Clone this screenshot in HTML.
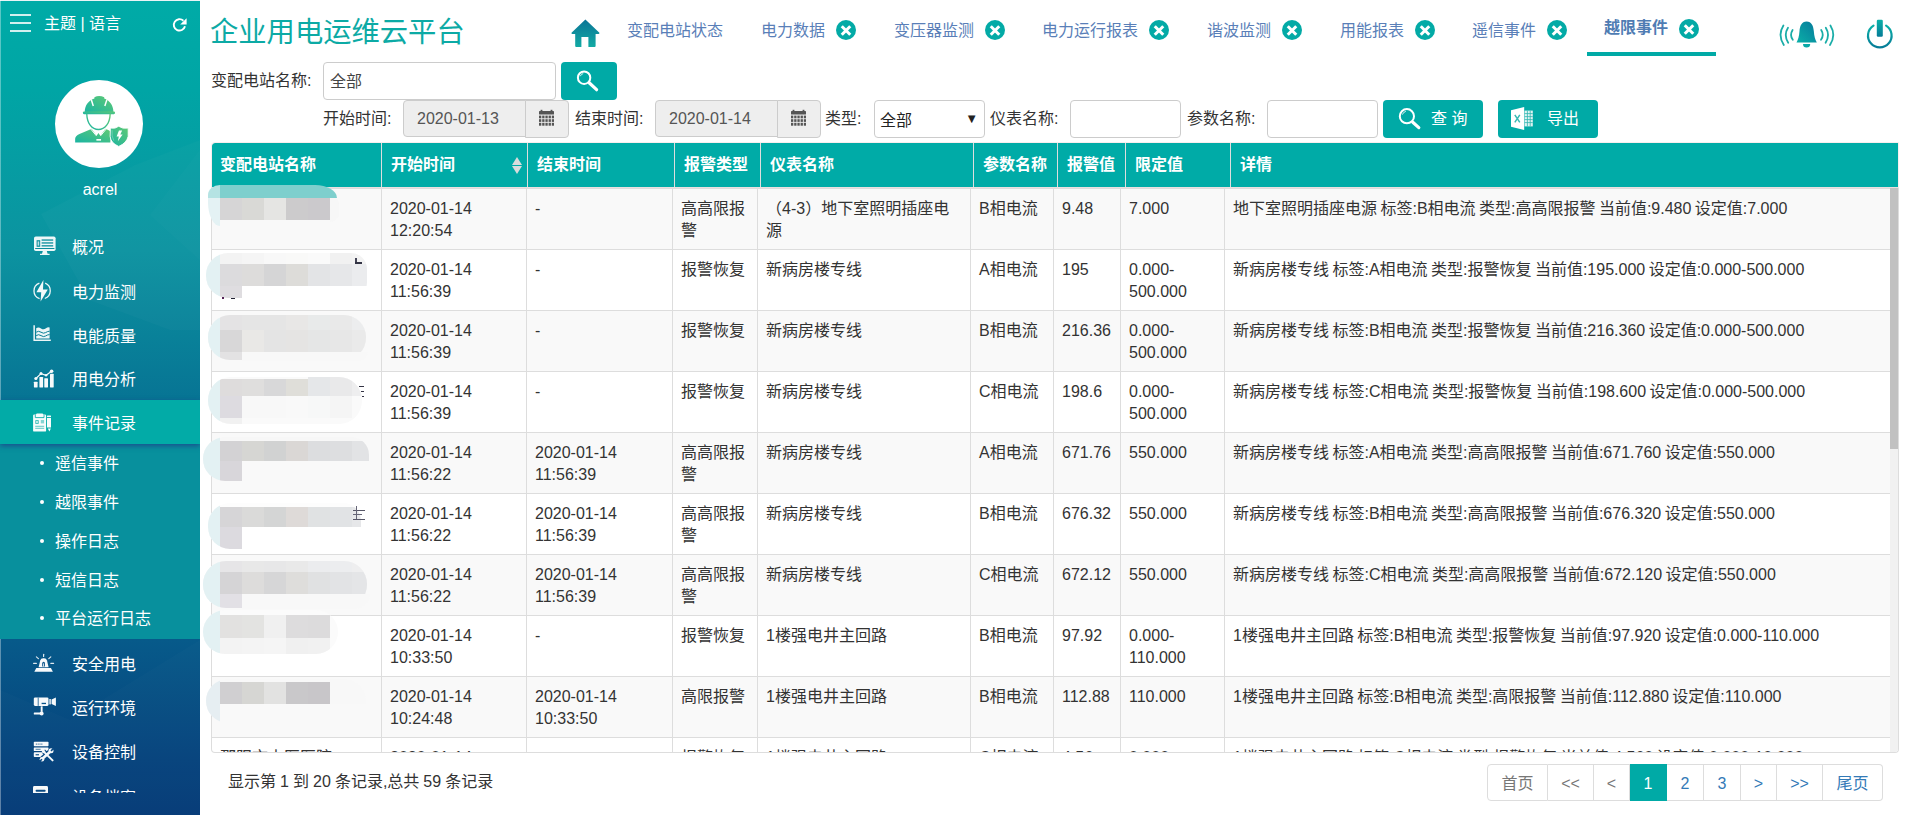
<!DOCTYPE html>
<html lang="zh-CN">
<head>
<meta charset="utf-8">
<title>企业用电运维云平台</title>
<style>
*{box-sizing:border-box;margin:0;padding:0}
html,body{width:1920px;height:815px;overflow:hidden;background:#fff}
body{font-family:"Liberation Sans","Noto Sans CJK SC",sans-serif;font-size:16px;color:#333;position:relative}
.abs{position:absolute}
#side{position:absolute;left:0;top:0;width:200px;height:815px;overflow:hidden;
 background:linear-gradient(180deg,#00aba7 0px,#00a5a5 90px,#0c93a0 250px,#077494 400px,#075a8a 640px,#06437c 760px,#053a77 815px)}
#side .topline{position:absolute;left:0;top:0;width:200px;height:1px;background:#e9f4f6}
#side .leftline{position:absolute;left:0;top:0;width:1px;height:815px;background:rgba(255,255,255,.35)}
#menu{position:absolute;left:0;top:0;width:200px;height:793px;overflow:hidden}
.ham{position:absolute;left:10px;top:14px;width:21px;height:18px}
.ham i{position:absolute;left:0;width:21px;height:2px;background:rgba(255,255,255,.82)}
.stitle{position:absolute;left:44px;top:13px;color:#fff;font-size:16px;line-height:22px;white-space:nowrap}
.avatar{position:absolute;left:55px;top:79.5px;width:88px;height:88px;border-radius:50%;background:#fff}
.uname{position:absolute;left:0;width:200px;top:179px;text-align:center;color:#fff;font-size:16px;line-height:22px}
.mi{position:absolute;left:0;width:200px;height:44px;color:#fff;font-size:16px;line-height:44px;padding-left:72px;white-space:nowrap}
.mi.act{background:#02aba7;box-shadow:0 2px 5px rgba(35,45,135,.65)}
.ic{position:absolute;left:0;top:0}
.sub{position:absolute;left:0;top:443px;width:200px;height:196px;background:#08909d}
.si{position:absolute;left:0;width:200px;height:39px;color:#fff;font-size:16px;line-height:41px;padding-left:55px;white-space:nowrap}
.si:before{content:"";position:absolute;left:39.5px;top:18px;width:4.4px;height:4.4px;border-radius:50%;background:#fff}
#title{position:absolute;left:210px;top:11px;font-size:28.3px;line-height:42px;color:#0caaa5;white-space:nowrap}
.tab{position:absolute;top:20px;font-size:16px;line-height:22px;color:#5a7fb8;white-space:nowrap}
.tab.on{font-weight:bold;color:#4f7cb3;top:17px}
.x{position:absolute;top:20px;width:20px;height:20px;border-radius:50%;background:#03aaa6}
.x:before,.x:after{content:"";position:absolute;left:4px;top:8.5px;width:12px;height:3px;background:#fff;transform:rotate(45deg)}
.x:after{transform:rotate(-45deg)}
.uline{position:absolute;left:1587px;top:52px;width:129px;height:4px;background:#00aaa6}
.lbl{position:absolute;font-size:16px;line-height:22px;color:#333;white-space:nowrap}
.inp{position:absolute;border:1px solid #ccc;border-radius:4px;background:#fff;font-size:16px;color:#555;white-space:nowrap}
.btn{position:absolute;background:#00aaa6;border-radius:4px;color:#fff;font-size:16px;white-space:nowrap}
#thead{position:absolute;left:211px;top:142px;width:1688px;height:46px;background:#00aba7;background-clip:padding-box;border:1px solid #f8eeee;border-bottom-color:#ebe0e0;border-radius:4px 1px 0 0}
#thead .th{position:absolute;top:0;height:44px;line-height:43px;color:#fff;font-weight:bold;font-size:16px;white-space:nowrap;padding-left:9px}
#thead .vs{position:absolute;top:0;width:1px;height:44px;background:#dedede}
#thead .sort{position:absolute;left:300px;top:14px;width:9px;height:17px}
#thead .sort:before,#thead .sort:after{content:"";position:absolute;left:-.5px;border-left:5px solid transparent;border-right:5px solid transparent}
#thead .sort:before{top:0;border-bottom:8px solid #d9dcdc}
#thead .sort:after{top:9px;border-top:8px solid #d9dcdc}
#tbody{position:absolute;left:211px;top:188px;width:1688px;height:565px;overflow:hidden;border:1px solid #ddd;border-top:none;border-radius:0 0 4px 4px}
.row{position:absolute;left:0;width:1678px;height:61px;border-top:1px solid #ddd}
.row.odd{background:#f9f9f9}
.c{position:absolute;top:0;height:61px;border-left:1px solid #ddd;padding:9px 0 0 8px;font-size:16px;line-height:22px;color:#333;white-space:nowrap}
.sbtrack{position:absolute;left:1678px;top:0;width:8px;height:566px;background:#f1f1f1}
.sbthumb{position:absolute;left:1890px;top:188px;width:8px;height:261px;background:#c1c1c1}
#foot{position:absolute;left:228px;top:771px;word-spacing:-.4px;font-size:16px;line-height:22px;color:#333;white-space:nowrap}
.pg{position:absolute;top:764px;height:37px;border:1px solid #ddd;border-left:none;background:#fff;color:#337ab7;font-size:16px;line-height:37px;text-align:center}
.sm{position:absolute;border-radius:22px}
.mz{position:absolute}
.c.d{word-spacing:-1px}

</style>
</head>
<body>
<div id="side">
 <div class="topline"></div><div class="leftline"></div>
 <svg class="ic" width="200" height="815" viewBox="0 0 200 815" style="opacity:.5"><polygon points="135,165 200,140 200,330 170,330 89,300 41,214" fill="rgba(255,255,255,.045)"/><polygon points="200,150 200,260 150,215" fill="rgba(255,255,255,.03)"/><polygon points="0,690 70,720 200,640 200,815 0,815" fill="rgba(255,255,255,.03)"/></svg>
 <div class="ham"><i style="top:0"></i><i style="top:8px"></i><i style="top:16px"></i></div>
 <div class="stitle">主题 | 语言</div>
 <div class="avatar"></div>
 <div class="uname">acrel</div>
 <div id="menu">
 <div class="mi" style="top:226px">概况</div>
 <div class="mi" style="top:271px">电力监测</div>
 <div class="mi" style="top:315px">电能质量</div>
 <div class="mi" style="top:358px">用电分析</div>
 <div class="sub">
  <div class="si" style="top:0">遥信事件</div>
  <div class="si" style="top:39px">越限事件</div>
  <div class="si" style="top:78px">操作日志</div>
  <div class="si" style="top:117px">短信日志</div>
  <div class="si" style="top:155px">平台运行日志</div>
 </div>
 <div class="mi act" style="top:400px;height:44px;line-height:48px">事件记录</div>
 <div class="mi" style="top:643px">安全用电</div>
 <div class="mi" style="top:687px">运行环境</div>
 <div class="mi" style="top:731px">设备控制</div>
 <div class="mi" style="top:776px">设备档案</div>
 <svg class="ic" width="200" height="815" viewBox="0 0 200 815" fill="#fff">
  <!-- refresh -->
  <g fill="none" stroke="#fff" stroke-width="1.9"><path d="M185.0 26.3 A5.7 5.7 0 1 1 183.4 20.7"/></g>
  <path d="M186.6 18.2 L186.6 24.6 L180.2 24.6 Z"/>
  <!-- monitor -->
  <g opacity=".93">
  <rect x="34" y="236.5" width="21.6" height="14.6" rx="1.8"/>
  <rect x="35.2" y="248" width="19.2" height="1" fill="#0b8e9c"/>
  <rect x="36.6" y="240.2" width="3.6" height="6.6" fill="#0b8e9c"/><rect x="37.6" y="241.4" width="1.6" height="4.2" fill="#cfe9ec"/>
  <rect x="41.6" y="239.4" width="11.6" height="1.3" fill="#0b8e9c"/><rect x="41.6" y="242.3" width="11.6" height="1.3" fill="#0b8e9c"/><rect x="41.6" y="245.2" width="11.6" height="1.3" fill="#0b8e9c"/>
  <path d="M42.8 251 L46.8 251 L47.6 253.8 L49.6 253.8 L49.6 255 L40 255 L40 253.8 L42 253.8 Z"/>
  </g>
  <!-- lightning -->
  <g fill="none" stroke="#fff" stroke-width="1.3" opacity=".93"><path d="M39.4 283.1 A8.2 8.2 0 0 0 39.6 298.6"/><path d="M45.2 283.2 A8.2 8.2 0 0 1 44.8 298.5"/></g>
  <path d="M43.4 280 L36.4 292.2 L41.2 292.2 L40.6 301.6 L47.8 289.4 L43 289.4 Z" opacity=".95"/>
  <!-- area chart -->
  <g opacity=".93">
  <path d="M33.4 325.2 L34.9 325.2 L34.9 339.5 L50.8 339.5 L50.8 341 L33.4 341 Z"/>
  <path d="M36.2 328.2 Q38.5 326.6 41 328.4 T45.6 328.6 T49.6 327.4 L49.6 338.4 L36.2 338.4 Z"/>
  <path d="M36.2 332.2 Q38.5 330.4 41 332.2 T45.6 332.6 T49.6 331.2" fill="none" stroke="#077f95" stroke-width="1"/>
  <path d="M36.2 335.6 Q38.5 333.8 41 335.6 T45.6 336 T49.6 334.6" fill="none" stroke="#077f95" stroke-width="1"/>
  </g>
  <!-- bar chart -->
  <g opacity=".97">
  <rect x="33.900" y="381.800" width="3.700" height="5.700" rx=".4"/><rect x="39.400" y="377.100" width="3.700" height="10.400" rx=".4"/><rect x="44.300" y="378.300" width="3.700" height="9.200" rx=".4"/><rect x="50" y="373.800" width="3.700" height="13.700" rx=".4"/>
  <path d="M35.900 378.500 L41 373.600 L46.100 375.300 L51.600 371.200" fill="none" stroke="#fff" stroke-width="1.200"/>
  <circle cx="35.900" cy="378.500" r="1.600"/><circle cx="41" cy="373.600" r="1.500"/><circle cx="46.100" cy="375.300" r="1.200"/><circle cx="51.600" cy="371.200" r="1.800"/>
  </g>
  <!-- notebook -->
  <g opacity=".97">
  <rect x="33.100" y="414.600" width="13" height="17" rx="1.200"/>
  <path d="M35.300 414.600 L35.300 417.600 L44 417.600 L44 414.600" fill="none" stroke="#14b0ab" stroke-width=".9"/>
  <rect x="36.100" y="413.400" width="7.100" height="3.500" rx="1"/>
  <rect x="35.200" y="420" width="3.600" height="4" rx=".8" fill="#14b0ab" opacity=".75"/><rect x="36.200" y="421.200" width="1.600" height="1.600" fill="#fff"/>
  <rect x="40.800" y="420" width="3.300" height="3.400" fill="#14b0ab" opacity=".5"/>
  <rect x="35.200" y="425.800" width="9" height=".9" fill="#14b0ab" opacity=".75"/>
  <rect x="35.200" y="427.800" width="9" height=".9" fill="#14b0ab" opacity=".75"/>
  <rect x="47" y="415.500" width="4" height="1.600" rx=".4"/>
  <rect x="47" y="417.900" width="4" height="9.600"/>
  <path d="M47.800 428.600 L50.900 428.600 L49.400 431.400 Z"/>
  </g>
  <!-- alarm -->
  <g opacity=".97">
  <path d="M38.600 667.200 L40.200 660.600 Q40.800 658.200 43.200 658.200 L44 658.200 Q46.400 658.200 47 660.600 L48.600 667.200 Z"/>
  <path d="M36.300 668 L50.900 668 L52.900 671.700 L34.300 671.700 Z"/>
  <path d="M42.200 666.600 L42.200 663.600 Q42.200 661.800 43.600 661.800 Q45 661.800 45 663.600 L45 666.600 Z" fill="#0a548b"/>
  <rect x="43.200" y="663.400" width=".9" height="3.200" fill="#fff"/>
  <g stroke="#fff" stroke-width="1.200" stroke-linecap="round" opacity=".9"><path d="M43.600 654.300 L43.600 656.400"/><path d="M36.400 656.900 L38.400 658.600"/><path d="M50.800 656.900 L48.800 658.600"/><path d="M33.600 663.300 L36.400 663.300"/><path d="M50.800 663.300 L53.600 663.300"/></g>
  </g>
  <!-- camera -->
  <g opacity=".97">
  <rect x="33.800" y="697.500" width="14.700" height="8.400" rx="1.300"/>
  <rect x="37.700" y="697.500" width="1" height="8.400" fill="#0a548a" opacity=".8"/>
  <rect x="41.600" y="702.800" width="4.400" height="1.300" fill="#0a548a"/>
  <rect x="49.200" y="699" width="1.800" height="5.400" opacity=".8"/>
  <path d="M51.600 699.400 L55.900 697.400 L55.900 706 L51.600 704 Z"/>
  <rect x="40.700" y="706.300" width="1.900" height="5.600"/>
  <rect x="33.800" y="712.600" width="6.600" height="2" rx=".5"/>
  <circle cx="41.600" cy="713.500" r="2"/>
  </g>
  <!-- device control -->
  <g opacity=".97">
  <rect x="33.800" y="741.800" width="14.700" height="4.500" rx=".7"/>
  <rect x="33.800" y="747.500" width="14.700" height="3.600" rx=".5"/>
  <rect x="33.800" y="752.200" width="10" height="4.800" rx=".7"/>
  <g fill="#084a84" opacity=".8"><rect x="35.800" y="743.600" width="1.200" height="1"/><rect x="37.600" y="743.600" width="1.200" height="1"/><rect x="39.400" y="743.600" width="1.200" height="1"/><rect x="41.200" y="743.600" width="1.200" height="1"/>
  <rect x="35.600" y="748.800" width="5" height=".9"/><rect x="35.600" y="754" width="3.400" height="1.400"/></g>
  <path d="M41.600 759.600 L52 750" stroke="#084a84" stroke-width="5.400" fill="none"/>
  <path d="M43.400 751.200 L53.200 760.800" stroke="#084a84" stroke-width="4.600" fill="none"/>
  <path d="M43.400 751.400 L52.600 760.400" stroke="#fff" stroke-width="2" fill="none" stroke-linecap="round"/>
  <circle cx="43.600" cy="751.600" r="1.700"/>
  <path d="M42.400 758.800 L50.600 751.200" stroke="#fff" stroke-width="2.600" fill="none" stroke-linecap="butt"/>
  <circle cx="51" cy="750.800" r="2.500"/><path d="M51 750.800 L54 748" stroke="#084a84" stroke-width="1.600"/>
  <circle cx="42" cy="759.200" r="2.300"/><path d="M42 759.200 L39.400 761.600" stroke="#084a84" stroke-width="1.500"/>
  </g>
  <!-- partial next icon -->
  <g opacity=".97"><rect x="33" y="786" width="15" height="12" rx="1.400"/><rect x="35.600" y="789.800" width="10" height="2" rx=".8" fill="#0b4b84"/></g>
 </svg>
 </div>
 <svg class="ic" width="200" height="200" viewBox="0 0 200 200">
  <defs><linearGradient id="ag" x1="1" y1="0" x2="0" y2="1"><stop offset="0" stop-color="#62ca74"/><stop offset="1" stop-color="#1ab4a2"/></linearGradient></defs>
  <g fill="url(#ag)" transform="translate(50 75) scale(0.1227)">
   <path d="M283 302 C283 245 318 205 362 192 L362 182 Q400 162 442 182 L442 192 C482 205 517 245 517 302 Z"/>
   <rect x="268" y="297" width="262" height="22" rx="9"/>
   <path d="M294 316 C296 400 340 450 395 450 C450 450 494 400 496 316 L485 316 C483 392 445 439 395 439 C345 439 307 392 305 316 Z"/>
   <path d="M205 550 L205 520 Q205 495 240 480 L322 446 L338 438 L380 496 L395 472 L410 496 L452 438 L478 450 L492 458 L492 550 Z"/>
   <path d="M560 418 Q530 442 492 432 L490 500 Q495 555 560 582 Q625 555 637 500 L637 432 Q592 442 560 418 Z" stroke="#fff" stroke-width="7"/>
  </g>
  <g fill="#fff" stroke="#fff" transform="translate(50 75) scale(0.1227)">
   <path d="M336 200 L353 252" stroke-width="12"/><path d="M464 200 L447 252" stroke-width="12"/>
   <path d="M332 440 L378 496" stroke-width="8"/><path d="M458 440 L412 496" stroke-width="8"/>
   <rect x="378" y="522" width="38" height="13" stroke="none"/>
   <path d="M562 452 L588 452 L573 484 L592 484 L553 540 L561 502 L543 502 Z" stroke="none"/>
   <path d="M506 450 Q500 500 520 535" stroke-width="4" fill="none" opacity=".6"/>
  </g>
 </svg>
</div>
<div id="title">企业用电运维云平台</div>

<svg class="abs" style="left:0;top:0" width="1920" height="140" viewBox="0 0 1920 140">
 <defs>
  <linearGradient id="hg" x1="0" y1="0" x2="0" y2="1"><stop offset="0" stop-color="#0b7596"/><stop offset="1" stop-color="#12aaa4"/></linearGradient>
  <linearGradient id="bg" x1="1" y1="0" x2="0" y2="1"><stop offset="0" stop-color="#06789a"/><stop offset="1" stop-color="#0bb0a8"/></linearGradient>
  <linearGradient id="pg" x1="0" y1="0" x2="0" y2="1"><stop offset="0" stop-color="#0cb0a8"/><stop offset="1" stop-color="#067c98"/></linearGradient>
 </defs>
 <!-- home -->
 <path d="M585.400 19.600 L599.400 32.800 Q599.600 34 598.400 34 L595.600 34 L595.600 46 Q595.600 47 594.600 47 L588.400 47 L588.400 37 L581.400 37 L581.400 47 L576.200 47 Q575.200 47 575.200 46 L575.200 34 L572.400 34 Q571.200 34 571.500 32.800 Z" fill="url(#hg)"/>
 <!-- bell -->
 <path d="M1806.600 21.400 C1811.600 21.400 1813.400 26 1813.800 31 C1814.200 36.500 1815.200 39.500 1816.800 42.600 L1796.500 42.600 C1798.100 39.500 1799.100 36.500 1799.500 31 C1799.900 26 1801.600 21.400 1806.600 21.400 Z" fill="url(#bg)"/>
 <path d="M1803 44 L1810.200 44 A3.600 3.600 0 0 1 1803 44 Z" fill="#0aa9a7"/>
 <g fill="none" stroke="#1aada8" stroke-width="1.800" stroke-linecap="round">
  <path d="M1783.400 25.400 Q1777.400 35 1783.800 45"/><path d="M1788 27.800 Q1783.400 35 1788.200 42.800"/><path d="M1792.600 30 Q1789.400 35 1792.800 39.800"/>
  <path d="M1830.400 25.400 Q1836.400 35 1830 45"/><path d="M1825.800 27.800 Q1830.400 35 1825.600 42.800"/><path d="M1821.200 30 Q1824.400 35 1821 39.800"/>
 </g>
 <!-- power -->
 <path d="M1873.500 25.600 A11.800 11.800 0 1 0 1886.100 25.600" fill="none" stroke="url(#pg)" stroke-width="2.200" stroke-linecap="round"/>
 <rect x="1876.800" y="19.800" width="6" height="16.900" rx="1.200" fill="url(#pg)"/>
</svg>
<div class="tab" style="left:627px">变配电站状态</div>
<div class="tab" style="left:761px">电力数据</div><div class="x" style="left:836px"></div>
<div class="tab" style="left:894px">变压器监测</div><div class="x" style="left:985px"></div>
<div class="tab" style="left:1042px">电力运行报表</div><div class="x" style="left:1149px"></div>
<div class="tab" style="left:1207px">谐波监测</div><div class="x" style="left:1282px"></div>
<div class="tab" style="left:1340px">用能报表</div><div class="x" style="left:1415px"></div>
<div class="tab" style="left:1472px">遥信事件</div><div class="x" style="left:1547px"></div>
<div class="tab on" style="left:1604px">越限事件</div><div class="x" style="left:1679px;top:19px"></div>
<div class="uline"></div>
<div class="lbl" style="left:211px;top:70px">变配电站名称:</div>
<div class="inp" style="left:323px;top:62px;width:233px;height:38px;line-height:37px;padding-left:6px;color:#444">全部</div>
<div class="btn" style="left:561px;top:62px;width:56px;height:38px"></div>
<div class="lbl" style="left:323px;top:108px">开始时间:</div>
<div class="inp" style="left:403px;top:100px;width:123px;height:37px;line-height:36px;padding-left:13px;background:#eee;border-radius:4px 0 0 4px">2020-01-13</div>
<div class="inp" style="left:525px;top:100px;width:44px;height:38px;background:#eee;border-radius:0 4px 4px 0"></div>
<div class="lbl" style="left:575px;top:108px">结束时间:</div>
<div class="inp" style="left:655px;top:100px;width:123px;height:37px;line-height:36px;padding-left:13px;background:#eee;border-radius:4px 0 0 4px">2020-01-14</div>
<div class="inp" style="left:777px;top:100px;width:44px;height:38px;background:#eee;border-radius:0 4px 4px 0"></div>
<div class="lbl" style="left:825px;top:108px">类型:</div>
<div class="inp" style="left:874px;top:100px;width:111px;height:38px;line-height:39px;padding-left:5px;color:#222">全部<span style="position:absolute;right:6px;top:-2px;font-size:13px;color:#222">&#9660;</span></div>
<div class="lbl" style="left:990px;top:108px">仪表名称:</div>
<div class="inp" style="left:1070px;top:100px;width:111px;height:38px"></div>
<div class="lbl" style="left:1187px;top:108px">参数名称:</div>
<div class="inp" style="left:1267px;top:100px;width:111px;height:38px"></div>
<div class="btn" style="left:1383px;top:100px;width:100px;height:38px;line-height:37px;padding-left:48px">查 询</div>
<div class="btn" style="left:1498px;top:100px;width:100px;height:38px;line-height:37px;padding-left:49px">导出</div>
<svg class="abs" style="left:0;top:0" width="1920" height="140" viewBox="0 0 1920 140">
 <!-- search icon in button -->
 <circle cx="584.100" cy="77.700" r="6.200" fill="none" stroke="#fff" stroke-width="2"/>
 <path d="M580.300 76.200 A4 4 0 0 1 583.200 73.600" fill="none" stroke="#d5f1f0" stroke-width="1"/>
 <path d="M589.400 83 L596.600 89.700" stroke="#fff" stroke-width="3.200" stroke-linecap="round"/>
 <circle cx="1406.900" cy="116.200" r="7.100" fill="none" stroke="#fff" stroke-width="2"/>
 <path d="M1402.400 114.600 A4.800 4.800 0 0 1 1405.800 111.400" fill="none" stroke="#d5f1f0" stroke-width="1"/>
 <path d="M1412.800 122.200 L1418.800 127.600" stroke="#fff" stroke-width="3.200" stroke-linecap="round"/>
 <!-- calendars -->
 <g fill="#555">
  <rect x="539" y="111" width="15" height="3.600" rx=".6"/>
  <rect x="540.600" y="109.800" width="1.800" height="2"/><rect x="550.600" y="109.800" width="1.800" height="2"/>
  <g>
   <rect x="539" y="115.600" width="2.300" height="2.700"/><rect x="542.200" y="115.600" width="2.300" height="2.700"/><rect x="545.400" y="115.600" width="2.300" height="2.700"/><rect x="548.600" y="115.600" width="2.300" height="2.700"/><rect x="551.800" y="115.600" width="2.200" height="2.700"/>
   <rect x="539" y="119.200" width="2.300" height="2.700"/><rect x="542.200" y="119.200" width="2.300" height="2.700"/><rect x="545.400" y="119.200" width="2.300" height="2.700"/><rect x="548.600" y="119.200" width="2.300" height="2.700"/><rect x="551.800" y="119.200" width="2.200" height="2.700"/>
   <rect x="539" y="122.800" width="2.300" height="2.900"/><rect x="542.200" y="122.800" width="2.300" height="2.900"/><rect x="545.400" y="122.800" width="2.300" height="2.900"/><rect x="548.600" y="122.800" width="2.300" height="2.900"/><rect x="551.800" y="122.800" width="2.200" height="2.900"/>
  </g>
 </g>
 <g fill="#555" transform="translate(252 0)">
  <rect x="539" y="111" width="15" height="3.600" rx=".6"/>
  <rect x="540.600" y="109.800" width="1.800" height="2"/><rect x="550.600" y="109.800" width="1.800" height="2"/>
  <g>
   <rect x="539" y="115.600" width="2.300" height="2.700"/><rect x="542.200" y="115.600" width="2.300" height="2.700"/><rect x="545.400" y="115.600" width="2.300" height="2.700"/><rect x="548.600" y="115.600" width="2.300" height="2.700"/><rect x="551.800" y="115.600" width="2.200" height="2.700"/>
   <rect x="539" y="119.200" width="2.300" height="2.700"/><rect x="542.200" y="119.200" width="2.300" height="2.700"/><rect x="545.400" y="119.200" width="2.300" height="2.700"/><rect x="548.600" y="119.200" width="2.300" height="2.700"/><rect x="551.800" y="119.200" width="2.200" height="2.700"/>
   <rect x="539" y="122.800" width="2.300" height="2.900"/><rect x="542.200" y="122.800" width="2.300" height="2.900"/><rect x="545.400" y="122.800" width="2.300" height="2.900"/><rect x="548.600" y="122.800" width="2.300" height="2.900"/><rect x="551.800" y="122.800" width="2.200" height="2.900"/>
  </g>
 </g>
 
 <!-- excel -->
 <path d="M1511 110.200 L1524.200 106.900 L1524.200 130 L1511 126.800 Z" fill="#fff"/>
 <rect x="1524.600" y="110.600" width="8.200" height="15.800" fill="#dff3f2"/>
 <g stroke="#2fb5b0" stroke-width=".8"><path d="M1524.600 113.600 H1532.800 M1524.600 116.600 H1532.800 M1524.600 119.600 H1532.800 M1524.600 122.600 H1532.800 M1527.400 110.600 V126.400 M1530.200 110.600 V126.400"/></g>
 <path d="M1514.800 114.800 L1519.800 122.400 M1519.800 114.800 L1514.800 122.400" stroke="#38b9b3" stroke-width="1.500" fill="none"/>
</svg>

<div id="thead">
<div class="th" style="left:-1px">变配电站名称</div>
<div class="vs" style="left:169px"></div>
<div class="th" style="left:170px">开始时间</div>
<div class="vs" style="left:315px"></div>
<div class="th" style="left:316px">结束时间</div>
<div class="vs" style="left:462px"></div>
<div class="th" style="left:463px">报警类型</div>
<div class="vs" style="left:548px"></div>
<div class="th" style="left:549px">仪表名称</div>
<div class="vs" style="left:761px"></div>
<div class="th" style="left:762px">参数名称</div>
<div class="vs" style="left:845px"></div>
<div class="th" style="left:846px">报警值</div>
<div class="vs" style="left:913px"></div>
<div class="th" style="left:914px">限定值</div>
<div class="vs" style="left:1018px"></div>
<div class="th" style="left:1019px">详情</div>
<div class="sort"></div>
</div>
<div id="tbody">
<div class="row odd" style="top:0px"><div class="c" style="left:0;width:169px;border-left:none"></div><div class="c" style="left:169px;width:145px">2020-01-14<br>12:20:54</div><div class="c" style="left:314px;width:146px">-</div><div class="c" style="left:460px;width:85px">高高限报<br>警</div><div class="c" style="left:545px;width:213px">（4-3）地下室照明插座电<br>源</div><div class="c" style="left:758px;width:83px">B相电流</div><div class="c" style="left:841px;width:67px">9.48</div><div class="c" style="left:908px;width:104px">7.000</div><div class="c d" style="left:1012px;width:666px">地下室照明插座电源 标签:B相电流 类型:高高限报警 当前值:9.480 设定值:7.000</div></div>
<div class="row" style="top:61px"><div class="c" style="left:0;width:169px;border-left:none"></div><div class="c" style="left:169px;width:145px">2020-01-14<br>11:56:39</div><div class="c" style="left:314px;width:146px">-</div><div class="c" style="left:460px;width:85px">报警恢复</div><div class="c" style="left:545px;width:213px">新病房楼专线</div><div class="c" style="left:758px;width:83px">A相电流</div><div class="c" style="left:841px;width:67px">195</div><div class="c" style="left:908px;width:104px">0.000-<br>500.000</div><div class="c d" style="left:1012px;width:666px">新病房楼专线 标签:A相电流 类型:报警恢复 当前值:195.000 设定值:0.000-500.000</div></div>
<div class="row odd" style="top:122px"><div class="c" style="left:0;width:169px;border-left:none"></div><div class="c" style="left:169px;width:145px">2020-01-14<br>11:56:39</div><div class="c" style="left:314px;width:146px">-</div><div class="c" style="left:460px;width:85px">报警恢复</div><div class="c" style="left:545px;width:213px">新病房楼专线</div><div class="c" style="left:758px;width:83px">B相电流</div><div class="c" style="left:841px;width:67px">216.36</div><div class="c" style="left:908px;width:104px">0.000-<br>500.000</div><div class="c d" style="left:1012px;width:666px">新病房楼专线 标签:B相电流 类型:报警恢复 当前值:216.360 设定值:0.000-500.000</div></div>
<div class="row" style="top:183px"><div class="c" style="left:0;width:169px;border-left:none"></div><div class="c" style="left:169px;width:145px">2020-01-14<br>11:56:39</div><div class="c" style="left:314px;width:146px">-</div><div class="c" style="left:460px;width:85px">报警恢复</div><div class="c" style="left:545px;width:213px">新病房楼专线</div><div class="c" style="left:758px;width:83px">C相电流</div><div class="c" style="left:841px;width:67px">198.6</div><div class="c" style="left:908px;width:104px">0.000-<br>500.000</div><div class="c d" style="left:1012px;width:666px">新病房楼专线 标签:C相电流 类型:报警恢复 当前值:198.600 设定值:0.000-500.000</div></div>
<div class="row odd" style="top:244px"><div class="c" style="left:0;width:169px;border-left:none"></div><div class="c" style="left:169px;width:145px">2020-01-14<br>11:56:22</div><div class="c" style="left:314px;width:146px">2020-01-14<br>11:56:39</div><div class="c" style="left:460px;width:85px">高高限报<br>警</div><div class="c" style="left:545px;width:213px">新病房楼专线</div><div class="c" style="left:758px;width:83px">A相电流</div><div class="c" style="left:841px;width:67px">671.76</div><div class="c" style="left:908px;width:104px">550.000</div><div class="c d" style="left:1012px;width:666px">新病房楼专线 标签:A相电流 类型:高高限报警 当前值:671.760 设定值:550.000</div></div>
<div class="row" style="top:305px"><div class="c" style="left:0;width:169px;border-left:none"></div><div class="c" style="left:169px;width:145px">2020-01-14<br>11:56:22</div><div class="c" style="left:314px;width:146px">2020-01-14<br>11:56:39</div><div class="c" style="left:460px;width:85px">高高限报<br>警</div><div class="c" style="left:545px;width:213px">新病房楼专线</div><div class="c" style="left:758px;width:83px">B相电流</div><div class="c" style="left:841px;width:67px">676.32</div><div class="c" style="left:908px;width:104px">550.000</div><div class="c d" style="left:1012px;width:666px">新病房楼专线 标签:B相电流 类型:高高限报警 当前值:676.320 设定值:550.000</div></div>
<div class="row odd" style="top:366px"><div class="c" style="left:0;width:169px;border-left:none"></div><div class="c" style="left:169px;width:145px">2020-01-14<br>11:56:22</div><div class="c" style="left:314px;width:146px">2020-01-14<br>11:56:39</div><div class="c" style="left:460px;width:85px">高高限报<br>警</div><div class="c" style="left:545px;width:213px">新病房楼专线</div><div class="c" style="left:758px;width:83px">C相电流</div><div class="c" style="left:841px;width:67px">672.12</div><div class="c" style="left:908px;width:104px">550.000</div><div class="c d" style="left:1012px;width:666px">新病房楼专线 标签:C相电流 类型:高高限报警 当前值:672.120 设定值:550.000</div></div>
<div class="row" style="top:427px"><div class="c" style="left:0;width:169px;border-left:none"></div><div class="c" style="left:169px;width:145px">2020-01-14<br>10:33:50</div><div class="c" style="left:314px;width:146px">-</div><div class="c" style="left:460px;width:85px">报警恢复</div><div class="c" style="left:545px;width:213px">1楼强电井主回路</div><div class="c" style="left:758px;width:83px">B相电流</div><div class="c" style="left:841px;width:67px">97.92</div><div class="c" style="left:908px;width:104px">0.000-<br>110.000</div><div class="c d" style="left:1012px;width:666px">1楼强电井主回路 标签:B相电流 类型:报警恢复 当前值:97.920 设定值:0.000-110.000</div></div>
<div class="row odd" style="top:488px"><div class="c" style="left:0;width:169px;border-left:none"></div><div class="c" style="left:169px;width:145px">2020-01-14<br>10:24:48</div><div class="c" style="left:314px;width:146px">2020-01-14<br>10:33:50</div><div class="c" style="left:460px;width:85px">高限报警</div><div class="c" style="left:545px;width:213px">1楼强电井主回路</div><div class="c" style="left:758px;width:83px">B相电流</div><div class="c" style="left:841px;width:67px">112.88</div><div class="c" style="left:908px;width:104px">110.000</div><div class="c d" style="left:1012px;width:666px">1楼强电井主回路 标签:B相电流 类型:高限报警 当前值:112.880 设定值:110.000</div></div>
<div class="row" style="top:549px"><div class="c" style="left:0;width:169px;border-left:none">邵阳市中医医院</div><div class="c" style="left:169px;width:145px">2020-01-14<br>10:24:48</div><div class="c" style="left:314px;width:146px">-</div><div class="c" style="left:460px;width:85px">报警恢复</div><div class="c" style="left:545px;width:213px">1楼强电井主回路</div><div class="c" style="left:758px;width:83px">C相电流</div><div class="c" style="left:841px;width:67px">4.56</div><div class="c" style="left:908px;width:104px">0.000-<br>10.000</div><div class="c d" style="left:1012px;width:666px">1楼强电井主回路 标签:C相电流 类型:报警恢复 当前值:4.560 设定值:0.000-10.000</div></div>
<div class="sbtrack"></div>
</div>
<div class="sbthumb"></div>
<div class="mz" style="left:220px;top:185px;width:117px;height:13px;background:#7ecfcd;border-radius:0 22px 0 0/0 13px 0 0"></div>
<div class="mz" style="left:208px;top:185px;width:12px;height:13px;background:#b5e3e3;border-radius:12px 0 0 0/10px 0 0 0"></div>
<div class="mz" style="left:208px;top:198px;width:12px;height:28px;background:#e4f2f4;border-radius:0 0 0 12px/0 0 0 24px"></div>
<div class="mz" style="left:330px;top:198px;width:9px;height:24px;background:rgba(246,246,246,.9);border-radius:0 9px 14px 0"></div>
<div class="mz" style="left:220px;top:198px;width:22px;height:22px;background:#d6d5d6;"></div>
<div class="mz" style="left:242px;top:198px;width:22px;height:22px;background:#d9d9d6;"></div>
<div class="mz" style="left:264px;top:198px;width:22px;height:22px;background:#e5e5e3;"></div>
<div class="mz" style="left:286px;top:198px;width:22px;height:22px;background:#cccbcc;"></div>
<div class="mz" style="left:308px;top:198px;width:22px;height:22px;background:#cbc9cc;"></div>
<div class="sm" style="left:206px;top:253px;width:161px;height:45px;background:#fcfcfc;border-radius:22px 16px 16px 22px;overflow:hidden"><div class="mz" style="left:0;top:0;width:14px;height:45px;background:#e3f1f3"></div><div class="mz" style="left:14px;top:0px;width:22px;height:11px;background:#f3f3f3"></div><div class="mz" style="left:36px;top:0px;width:22px;height:11px;background:#f5f5f5"></div><div class="mz" style="left:58px;top:0px;width:22px;height:11px;background:#f8f8f8"></div><div class="mz" style="left:80px;top:0px;width:22px;height:11px;background:#f9f9f8"></div><div class="mz" style="left:102px;top:0px;width:22px;height:11px;background:#fafafa"></div><div class="mz" style="left:124px;top:0px;width:22px;height:11px;background:#f1f1f1"></div><div class="mz" style="left:146px;top:0px;width:22px;height:11px;background:#f3f3f3"></div><div class="mz" style="left:14px;top:11px;width:22px;height:22px;background:#dcdbdd"></div><div class="mz" style="left:36px;top:11px;width:22px;height:22px;background:#dddcdb"></div><div class="mz" style="left:58px;top:11px;width:22px;height:22px;background:#d5d5d6"></div><div class="mz" style="left:80px;top:11px;width:22px;height:22px;background:#dddcd9"></div><div class="mz" style="left:102px;top:11px;width:22px;height:22px;background:#e3e4e6"></div><div class="mz" style="left:124px;top:11px;width:22px;height:22px;background:#e6e7e9"></div><div class="mz" style="left:146px;top:11px;width:22px;height:22px;background:#ebecee"></div><div class="mz" style="left:14px;top:33px;width:22px;height:12px;background:#dfdde0"></div></div>
<div class="mz" style="left:242px;top:286px;width:130px;height:13px;background:#fff;"></div>
<div class="sm" style="left:208px;top:315px;width:158px;height:45px;background:#f6f6f6;border-radius:22px 22px 22px 22px;overflow:hidden"><div class="mz" style="left:0;top:0;width:12px;height:45px;background:#e3f1f3"></div><div class="mz" style="left:12px;top:0px;width:22px;height:15px;background:#e4e3e4"></div><div class="mz" style="left:34px;top:0px;width:22px;height:15px;background:#e5e5e5"></div><div class="mz" style="left:56px;top:0px;width:22px;height:15px;background:#e5e5e5"></div><div class="mz" style="left:78px;top:0px;width:22px;height:15px;background:#e8e7e6"></div><div class="mz" style="left:100px;top:0px;width:22px;height:15px;background:#e8eaea"></div><div class="mz" style="left:122px;top:0px;width:22px;height:15px;background:#e9e9e9"></div><div class="mz" style="left:144px;top:0px;width:22px;height:15px;background:#ecedee"></div><div class="mz" style="left:12px;top:15px;width:22px;height:22px;background:#d8d7d8"></div><div class="mz" style="left:34px;top:15px;width:22px;height:22px;background:#e9e8e6"></div><div class="mz" style="left:56px;top:15px;width:22px;height:22px;background:#e4e4e4"></div><div class="mz" style="left:78px;top:15px;width:22px;height:22px;background:#e5e4e3"></div><div class="mz" style="left:100px;top:15px;width:22px;height:22px;background:#e5e6e6"></div><div class="mz" style="left:122px;top:15px;width:22px;height:22px;background:#e7e7e7"></div><div class="mz" style="left:144px;top:15px;width:22px;height:22px;background:#eaeaea"></div><div class="mz" style="left:12px;top:37px;width:22px;height:8px;background:#e3e2e3"></div></div>
<div class="mz" style="left:242px;top:352px;width:126px;height:9px;background:#f8f8f8;border-radius:0 0 20px 0"></div>
<div class="sm" style="left:208px;top:377px;width:154px;height:47px;background:#fafafa;border-radius:23px;overflow:hidden"><div class="mz" style="left:0;top:0;width:12px;height:47px;background:#e3f1f3"></div><div class="mz" style="left:12px;top:2px;width:22px;height:17px;background:#dedcdc"></div><div class="mz" style="left:34px;top:2px;width:22px;height:17px;background:#dfdedd"></div><div class="mz" style="left:56px;top:2px;width:22px;height:17px;background:#d8d8d9"></div><div class="mz" style="left:78px;top:2px;width:22px;height:17px;background:#dfded9"></div><div class="mz" style="left:100px;top:0px;width:22px;height:19px;background:#e5e7e9"></div><div class="mz" style="left:122px;top:0px;width:22px;height:19px;background:#e9e9ea"></div><div class="mz" style="left:144px;top:0px;width:22px;height:19px;background:#eeeeef"></div><div class="mz" style="left:12px;top:19px;width:22px;height:22px;background:#dddbe0"></div><div class="mz" style="left:34px;top:19px;width:22px;height:22px;background:#f8f8f8"></div><div class="mz" style="left:56px;top:19px;width:22px;height:22px;background:#f8f8f8"></div><div class="mz" style="left:78px;top:19px;width:22px;height:22px;background:#f9f9f9"></div><div class="mz" style="left:100px;top:19px;width:22px;height:22px;background:#f7f8f8"></div><div class="mz" style="left:122px;top:19px;width:22px;height:22px;background:#f5f5f5"></div><div class="mz" style="left:12px;top:41px;width:22px;height:6px;background:#f1f1f1"></div></div>
<div class="sm" style="left:203px;top:437px;width:166px;height:44px;background:#f7f7f7;border-radius:22px 18px 18px 22px;overflow:hidden"><div class="mz" style="left:0;top:0;width:17px;height:44px;background:#e3f1f3"></div><div class="mz" style="left:17px;top:4px;width:22px;height:20px;background:#d3d2d4"></div><div class="mz" style="left:39px;top:4px;width:22px;height:20px;background:#d6d6d3"></div><div class="mz" style="left:61px;top:4px;width:22px;height:20px;background:#d1d2d2"></div><div class="mz" style="left:83px;top:4px;width:22px;height:20px;background:#dad7d5"></div><div class="mz" style="left:105px;top:4px;width:22px;height:20px;background:#dcdddf"></div><div class="mz" style="left:127px;top:4px;width:22px;height:20px;background:#dddee0"></div><div class="mz" style="left:149px;top:4px;width:22px;height:20px;background:#e2e3e5"></div><div class="mz" style="left:17px;top:24px;width:22px;height:20px;background:#d8d6da"></div></div>
<div class="mz" style="left:242px;top:461px;width:130px;height:21px;background:#f9f9f9;"></div>
<div class="sm" style="left:208px;top:503px;width:153px;height:46px;background:#fdfdfd;border-radius:22px 18px 18px 22px;overflow:hidden"><div class="mz" style="left:0;top:0;width:12px;height:46px;background:#e3f1f3"></div><div class="mz" style="left:12px;top:4px;width:22px;height:20px;background:#d6d5d7"></div><div class="mz" style="left:34px;top:4px;width:22px;height:20px;background:#dadad9"></div><div class="mz" style="left:56px;top:4px;width:22px;height:20px;background:#d4d5d5"></div><div class="mz" style="left:78px;top:4px;width:22px;height:20px;background:#dedad8"></div><div class="mz" style="left:100px;top:4px;width:22px;height:20px;background:#e0e2e3"></div><div class="mz" style="left:122px;top:4px;width:22px;height:20px;background:#e1e3e5"></div><div class="mz" style="left:144px;top:4px;width:22px;height:20px;background:#e6e7e9"></div><div class="mz" style="left:12px;top:24px;width:22px;height:22px;background:#dcdadf"></div></div>
<div class="mz" style="left:242px;top:527px;width:125px;height:23px;background:#fff;"></div>
<div class="sm" style="left:203px;top:561px;width:164px;height:47px;background:#f5f5f6;border-radius:23px;overflow:hidden"><div class="mz" style="left:0;top:0;width:17px;height:47px;background:#e3f1f3"></div><div class="mz" style="left:17px;top:0px;width:22px;height:11px;background:#e6e5e7"></div><div class="mz" style="left:39px;top:0px;width:22px;height:11px;background:#e8e8e8"></div><div class="mz" style="left:61px;top:0px;width:22px;height:11px;background:#e7e7e8"></div><div class="mz" style="left:83px;top:0px;width:22px;height:11px;background:#e9e9e9"></div><div class="mz" style="left:105px;top:0px;width:22px;height:11px;background:#ebecee"></div><div class="mz" style="left:127px;top:0px;width:22px;height:11px;background:#ecedef"></div><div class="mz" style="left:149px;top:0px;width:22px;height:11px;background:#eeeeef"></div><div class="mz" style="left:17px;top:11px;width:22px;height:22px;background:#d5d4d6"></div><div class="mz" style="left:39px;top:11px;width:22px;height:22px;background:#dddcdb"></div><div class="mz" style="left:61px;top:11px;width:22px;height:22px;background:#d6d6d7"></div><div class="mz" style="left:83px;top:11px;width:22px;height:22px;background:#dedddb"></div><div class="mz" style="left:105px;top:11px;width:22px;height:22px;background:#e0e1e2"></div><div class="mz" style="left:127px;top:11px;width:22px;height:22px;background:#e2e3e5"></div><div class="mz" style="left:149px;top:11px;width:22px;height:22px;background:#e4e5e7"></div><div class="mz" style="left:17px;top:33px;width:22px;height:14px;background:#e2e0e5"></div></div>
<div class="mz" style="left:242px;top:594px;width:128px;height:15px;background:#f8f8f8;border-radius:0 0 22px 0"></div>
<div class="sm" style="left:203px;top:610px;width:135px;height:44px;background:#fbfbfb;border-radius:22px;overflow:hidden"><div class="mz" style="left:0;top:0;width:17px;height:44px;background:#e3f1f3"></div><div class="mz" style="left:17px;top:5px;width:22px;height:23px;background:#e2e1e0"></div><div class="mz" style="left:39px;top:5px;width:22px;height:23px;background:#e3e3e1"></div><div class="mz" style="left:61px;top:5px;width:22px;height:23px;background:#f0f0f0"></div><div class="mz" style="left:83px;top:5px;width:22px;height:23px;background:#dddcdd"></div><div class="mz" style="left:105px;top:5px;width:22px;height:23px;background:#dcdbdc"></div><div class="mz" style="left:17px;top:28px;width:22px;height:16px;background:#f3f3f3"></div><div class="mz" style="left:39px;top:28px;width:22px;height:16px;background:#f4f4f4"></div><div class="mz" style="left:61px;top:28px;width:22px;height:16px;background:#f5f5f5"></div><div class="mz" style="left:83px;top:28px;width:22px;height:16px;background:#f0f0f0"></div><div class="mz" style="left:105px;top:28px;width:22px;height:16px;background:#f1f1f1"></div></div>
<div class="sm" style="left:206px;top:679px;width:160px;height:44px;background:#f8f8f8;border-radius:22px;overflow:hidden"><div class="mz" style="left:0;top:0;width:14px;height:44px;background:#e6eef2"></div><div class="mz" style="left:14px;top:3px;width:22px;height:22px;background:#d0cfd1"></div><div class="mz" style="left:36px;top:3px;width:22px;height:22px;background:#d6d6d3"></div><div class="mz" style="left:58px;top:3px;width:22px;height:22px;background:#e2e2e1"></div><div class="mz" style="left:80px;top:3px;width:22px;height:22px;background:#c9c8ca"></div><div class="mz" style="left:102px;top:3px;width:22px;height:22px;background:#c8c6c9"></div></div>
<div class="mz" style="left:220px;top:704px;width:150px;height:20px;background:#f9f9f9;"></div>
<div class="mz" style="left:355px;top:262px;width:7px;height:2px;background:#334"></div>
<div class="mz" style="left:355px;top:258px;width:2px;height:4px;background:#445"></div>
<div class="mz" style="left:222px;top:297px;width:2px;height:2px;background:#525"></div><div class="mz" style="left:231px;top:298px;width:4px;height:1px;background:#223"></div>
<div class="mz" style="left:359px;top:386px;width:5px;height:1px;background:#334"></div><div class="mz" style="left:361px;top:391px;width:3px;height:1px;background:#334"></div><div class="mz" style="left:362px;top:396px;width:2px;height:1px;background:#334"></div>
<div class="mz" style="left:353px;top:510px;width:12px;height:1px;background:#556"></div><div class="mz" style="left:356px;top:506px;width:1px;height:13px;background:#667"></div><div class="mz" style="left:353px;top:514px;width:9px;height:1px;background:#667"></div><div class="mz" style="left:353px;top:519px;width:12px;height:1px;background:#556"></div>

<div id="foot">显示第 1 到 20 条记录,总共 59 条记录</div>
<div class="pg" style="left:1487px;width:61px;border-left:1px solid #ddd;border-radius:4px 0 0 4px;color:#777;">首页</div>
<div class="pg" style="left:1548px;width:46px;color:#777;">&lt;&lt;</div>
<div class="pg" style="left:1594px;width:36px;color:#777;">&lt;</div>
<div class="pg" style="left:1630px;width:37px;background:#00aaa6;color:#fff;border-color:#00aaa6;">1</div>
<div class="pg" style="left:1667px;width:37px;">2</div>
<div class="pg" style="left:1704px;width:37px;">3</div>
<div class="pg" style="left:1741px;width:36px;">&gt;</div>
<div class="pg" style="left:1777px;width:46px;">&gt;&gt;</div>
<div class="pg" style="left:1823px;width:60px;border-radius:0 4px 4px 0;">尾页</div>
</body>
</html>
